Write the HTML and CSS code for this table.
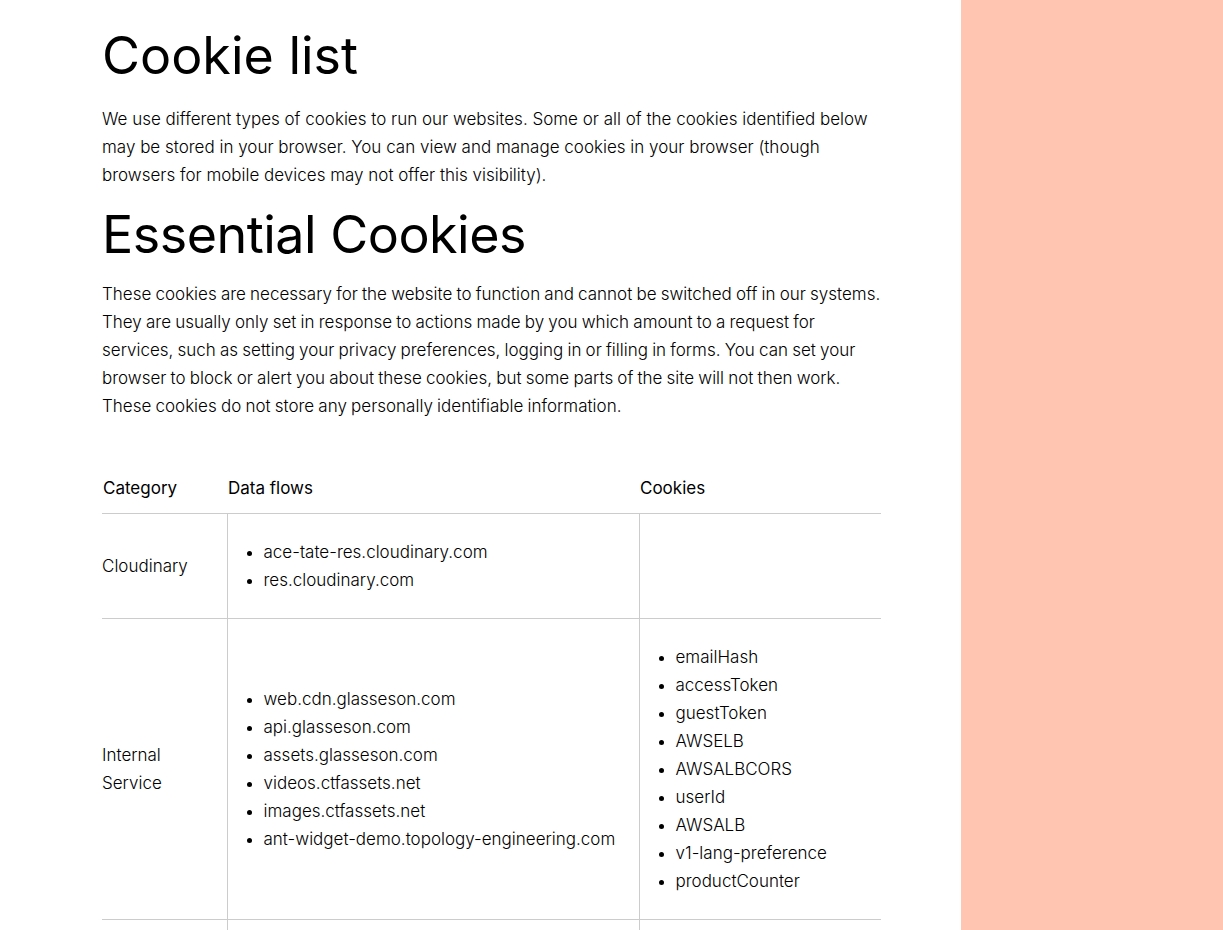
FILE: index.html
```html
<!DOCTYPE html>
<html lang="en">
<head>
<meta charset="utf-8">
<title>Cookie list</title>
<link rel="stylesheet" href="styles.css">
</head>
<body>
<div class="page">
  <main class="main">
    <div class="content">
      <h1 class="title">Cookie list</h1>
      <p class="text">We use different types of cookies to run our websites. Some or all of the cookies identified below<br>may be stored in your browser. You can view and manage cookies in your browser (though<br>browsers for mobile devices may not offer this visibility).</p>
      <h2 class="title title-2">Essential Cookies</h2>
      <p class="text text-2">These cookies are necessary for the website to function and cannot be switched off in our systems.<br>They are usually only set in response to actions made by you which amount to a request for<br>services, such as setting your privacy preferences, logging in or filling in forms. You can set your<br>browser to block or alert you about these cookies, but some parts of the site will not then work.<br>These cookies do not store any personally identifiable information.</p>
      <table class="cookies">
        <thead>
          <tr>
            <th class="c1">Category</th>
            <th class="c2">Data flows</th>
            <th class="c3">Cookies</th>
          </tr>
        </thead>
        <tbody>
          <tr>
            <td class="cat">Cloudinary</td>
            <td class="flows"><ul class="list"><li>ace-tate-res.cloudinary.com</li><li>res.cloudinary.com</li></ul></td>
            <td class="cks"></td>
          </tr>
          <tr>
            <td class="cat">Internal Service</td>
            <td class="flows"><ul class="list"><li>web.cdn.glasseson.com</li><li>api.glasseson.com</li><li>assets.glasseson.com</li><li>videos.ctfassets.net</li><li>images.ctfassets.net</li><li>ant-widget-demo.topology-engineering.com</li></ul></td>
            <td class="cks"><ul class="list"><li>emailHash</li><li>accessToken</li><li>guestToken</li><li>AWSELB</li><li>AWSALBCORS</li><li>userId</li><li>AWSALB</li><li>v1-lang-preference</li><li>productCounter</li></ul></td>
          </tr>
          <tr>
            <td class="cat">&nbsp;</td>
            <td class="flows"><ul class="list"><li>&nbsp;</li></ul></td>
            <td class="cks"></td>
          </tr>
        </tbody>
      </table>
    </div>
  </main>
  <aside class="side"></aside>
</div>
</body>
</html>
```

FILE: styles.css
```css
html, body {
  margin: 0;
  padding: 0;
  height: 100%;
  overflow: hidden;
}
body {
  font-family: Inter, "Liberation Sans", sans-serif;
  color: #000;
  background: #fff;
}
.page {
  display: flex;
  height: 930px;
}
.main {
  width: 961px;
  flex: none;
}
.side {
  flex: 1;
  background: #ffc5b0;
}
.content {
  padding-left: 102px;
  width: 779px;
  padding-top: 22px;
}
.title {
  font-weight: 400;
  font-size: 52px;
  line-height: 68px;
  margin: 0;
}
.title-2 {
  margin-top: 12px;
  letter-spacing: -0.5px;
}
.text {
  font-size: 17px;
  font-weight: 300;
  line-height: 28px;
  margin: 15px 0 8px;
  width: 820px;
  white-space: nowrap;
}
.text-2 {
  margin-top: 11px;
  word-spacing: -0.6px;
}
.cookies {
  width: 779px;
  border-collapse: collapse;
  margin-top: 46px;
  font-size: 17px;
  line-height: 28px;
  font-weight: 300;
}
.cookies th {
  text-align: left;
  font-weight: 400;
  padding: 8px 1px 11px;
  border-bottom: 1px solid #cccccc;
}
.c1 { width: 123px; }
.c2 { width: 410px; }
.cookies td {
  padding: 0;
  vertical-align: middle;
  border-bottom: 1px solid #cccccc;
}
.cookies td.cat {
  padding-right: 4px;
}
.cookies td + td {
  border-left: 1px solid #cccccc;
}
.list {
  margin: 24px 0;
  padding-left: 36px;
}
```
